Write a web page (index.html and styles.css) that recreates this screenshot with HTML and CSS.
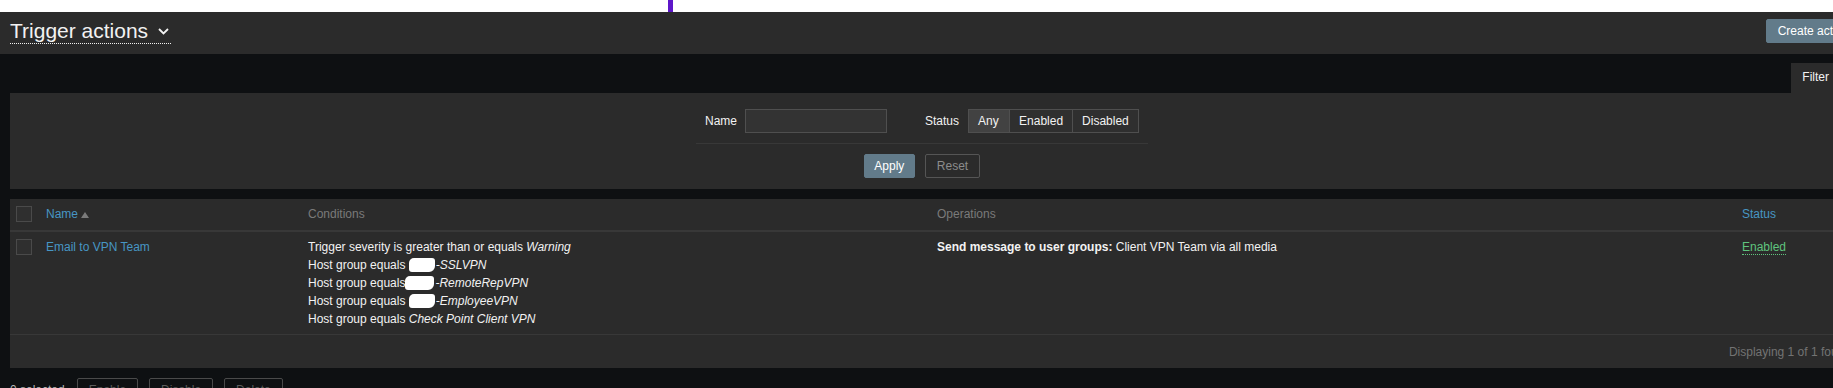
FILE: index.html
```html
<!DOCTYPE html>
<html>
<head>
    <title>Trigger actions</title>
    <link rel="stylesheet" href="styles.css">
</head>
<body>
    <div class="topstrip"><span class="cursor"></span></div>
    <div class="page">
        <header class="page-header">
            <h1 class="page-title">Trigger actions
                <svg class="chevron" width="11" height="7" viewBox="0 0 11 7"><path d="M1 1l4.5 4.5L10 1" fill="none" stroke="#f2f2f2" stroke-width="1.8"/></svg>
            </h1>
            <button class="btn btn-primary">Create action</button>
        </header>

        <div class="filter">
            <div class="filter-tabs">
                <div class="filter-tab">Filter</div>
            </div>
            <div class="filter-body">
                <form class="filter-form">
                    <div class="filter-fields">
                        <label class="field-label">Name</label>
                        <input type="text" class="field-input">
                        <label class="field-label status-label">Status</label>
                        <div class="segmented">
                            <span class="seg seg-on">Any</span>
                            <span class="seg">Enabled</span>
                            <span class="seg">Disabled</span>
                        </div>
                    </div>
                    <div class="filter-buttons">
                        <button type="button" class="btn btn-primary btn-apply">Apply</button>
                        <button type="button" class="btn btn-alt">Reset</button>
                    </div>
                </form>
            </div>
        </div>

        <table class="list-table">
            <colgroup>
                <col style="width:30px">
                <col style="width:262px">
                <col style="width:629px">
                <col style="width:805px">
                <col>
            </colgroup>
            <thead>
                <tr>
                    <th><span class="checkbox"></span></th>
                    <th><a class="link">Name</a> <span class="sort-up"></span></th>
                    <th>Conditions</th>
                    <th>Operations</th>
                    <th><a class="link">Status</a></th>
                </tr>
            </thead>
            <tbody>
                <tr>
                    <td><span class="checkbox"></span></td>
                    <td><a class="link">Email to VPN Team</a></td>
                    <td>
                        Trigger severity is greater than or equals <em>Warning</em><br>
                        Host group equals <span class="redact"></span><em>-SSLVPN</em><br>
                        Host group equals<span class="redact redact-wide"></span><em>-RemoteRepVPN</em><br>
                        Host group equals <span class="redact"></span><em>-EmployeeVPN</em><br>
                        Host group equals <em>Check Point Client VPN</em>
                    </td>
                    <td><b>Send message to user groups:</b> Client VPN Team via all media</td>
                    <td><a class="status-on">Enabled</a></td>
                </tr>
            </tbody>
            <tfoot>
                <tr>
                    <td colspan="5" class="paging">Displaying 1 of 1 found</td>
                </tr>
            </tfoot>
        </table>

        <div class="action-bar">
            <span class="selected-count">0 selected</span>
            <button class="btn btn-alt" disabled>Enable</button>
            <button class="btn btn-alt" disabled>Disable</button>
            <button class="btn btn-alt" disabled>Delete</button>
        </div>
    </div>
</body>
</html>
```

FILE: styles.css
```css
body {
    margin: 0;
    background-color: #0e1012;
    color: #f2f2f2;
    font-family: "Liberation Sans", Arial, sans-serif;
    font-size: 12px;
    overflow: hidden;
}
.topstrip { height: 12px; background: #fff; display: flex; }
.cursor { width: 5px; height: 12px; margin-left: 668px; background: #5e17c9; }

.page { width: 1866px; }

.page-header {
    height: 42px;
    box-sizing: border-box;
    padding: 7px 5px 0 10px;
    background-color: #2b2b2b;
    display: flex;
    justify-content: space-between;
    align-items: flex-start;
}
.page-title {
    margin: 0;
    font-size: 21px;
    font-weight: normal;
    display: inline-flex;
    align-items: center;
    gap: 10px;
    border-bottom: 1px dotted #f2f2f2;
}
.chevron { margin-top: 1px; margin-right: 2px; }

.btn {
    height: 24px;
    padding: 0 11px;
    font-family: "Liberation Sans", Arial, sans-serif;
    font-size: 12px;
    border-radius: 2px;
    cursor: pointer;
}
.btn-primary { background-color: #627b8a; color: #fff; border: 1px solid #627b8a; }
.btn-alt { background: transparent; color: #8c8c8c; border: 1px solid #555; }

.filter { margin-top: 9px; }
.filter-tabs { display: flex; justify-content: flex-end; }
.filter-tab {
    margin-right: 26px;
    height: 30px;
    line-height: 28px;
    padding: 0 11px;
    background-color: #2b2b2b;
}
.filter-body {
    margin-left: 10px;
    background-color: #2b2b2b;
    padding: 16px 32px 11px 0;
    display: flex;
    justify-content: center;
}
.filter-form { width: 452px; }
.filter-fields {
    display: flex;
    align-items: center;
    padding: 0 9px 10px;
    border-bottom: 1px solid #383838;
}
.field-label { margin-right: 8px; }
.field-input {
    width: 142px;
    height: 24px;
    box-sizing: border-box;
    background-color: #333;
    border: 1px solid #4f4f4f;
    color: #f2f2f2;
}
.status-label { margin-left: 38px; margin-right: 9px; }
.segmented { display: flex; border: 1px solid #4f4f4f; height: 22px; }
.seg {
    line-height: 22px;
    padding: 0 9px;
    background-color: #2f2f2f;
    border-left: 1px solid #4f4f4f;
}
.seg:first-child { border-left: none; }
.seg-on { background-color: #424242; width: 22px; }
.filter-buttons {
    display: flex;
    justify-content: center;
    gap: 10px;
    padding-top: 10px;
}
.btn-apply { width: 51px; padding: 0; }

.list-table {
    margin: 10px 0 0 10px;
    width: 1847px;
    table-layout: fixed;
    border-collapse: collapse;
    background-color: #2b2b2b;
}
.list-table th, .list-table td {
    text-align: left;
    vertical-align: top;
    line-height: 18px;
    padding: 6px 6px;
}
.list-table th {
    font-weight: normal;
    color: #7a7a7a;
    padding-bottom: 7px;
    border-bottom: 2px solid #383838;
}
.list-table tbody td { border-bottom: 1px solid #383838; }
.link { color: #4796c4; }
.sort-up {
    display: inline-block;
    width: 0;
    height: 0;
    border-left: 4px solid transparent;
    border-right: 4px solid transparent;
    border-bottom: 6px solid #7a7a7a;
}
.checkbox {
    display: inline-block;
    width: 14px;
    height: 14px;
    margin-top: 1px;
    border: 1px solid #4a4a4a;
    background-color: #2f2f2f;
    vertical-align: top;
}
.redact {
    display: inline-block;
    width: 26px;
    height: 14px;
    margin-right: 1px;
    background: #fff;
    border-radius: 5px 3px 6px 3px;
    vertical-align: -3px;
}
.redact-wide { width: 29px; }
.status-on { color: #5fc47e; border-bottom: 1px dotted #5fc47e; }
.paging {
    text-align: right !important;
    color: #737373;
    padding: 8px 6px 7px !important;
}

.action-bar {
    margin: 10px 0 0 10px;
    display: flex;
    align-items: center;
    gap: 11px;
    color: #b5b5b5;
}
.selected-count { margin-right: 1px; }
.action-bar .btn-alt { color: #5c5c5c; border-color: #4a4a4a; }
```
